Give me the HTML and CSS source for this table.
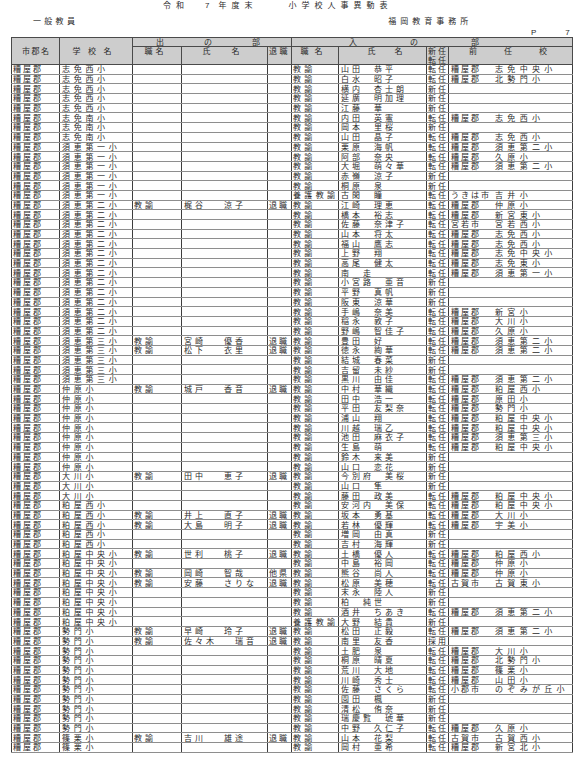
FILE: index.html
```html
<!DOCTYPE html>
<html lang="ja">
<head>
<meta charset="utf-8">
<title>令和７年度末 小学校人事異動表</title>
<link rel="stylesheet" href="styles.css">
</head>
<body>
<div class="page">
  <div class="title"><span class="t1">令和</span><span class="t2">7</span><span class="t3">年度末</span><span class="t4">小学校人事異動表</span></div>
  <div class="sub"><span class="kind">一般教員</span><span class="office">福岡教育事務所</span></div>
  <div class="pno"><span>P</span><span class="pnum">7</span></div>
  <table class="roster">
    <colgroup>
      <col style="width:48px"><col style="width:73px"><col style="width:49px"><col style="width:86px"><col style="width:24px"><col style="width:47px"><col style="width:88px"><col style="width:22px"><col style="width:124px">
    </colgroup>
    <thead>
      <tr class="h1">
        <th rowspan="2" class="h-city"><span class="lab">市郡名</span></th>
        <th rowspan="2" class="h-school"><span class="lab">学校名</span></th>
        <th colspan="3" class="h-out"><span class="lab">出の部</span></th>
        <th colspan="4" class="h-in"><span class="lab">入の部</span></th>
      </tr>
      <tr class="h2">
        <th class="h-pos"><span class="lab">職名</span></th>
        <th class="h-name"><span class="lab">氏名</span></th>
        <th class="h-ret"><span class="lab">退職</span></th>
        <th class="h-pos2"><span class="lab">職名</span></th>
        <th class="h-name2"><span class="lab">氏名</span></th>
        <th class="h-new"><span class="lab">新任</span><br><span class="lab">転任</span></th>
        <th class="h-prev"><span class="lab">前任校</span></th>
      </tr>
    </thead>
    <tbody>
      <tr><td>糟屋郡</td><td>志免西小</td><td></td><td></td><td></td><td>教諭</td><td><span>山田</span><span>恭平</span></td><td>転任</td><td><span class="pc">糟屋郡</span><span class="ps">志免中央小</span></td></tr>
      <tr><td>糟屋郡</td><td>志免西小</td><td></td><td></td><td></td><td>教諭</td><td><span>白水</span><span>昭子</span></td><td>転任</td><td><span class="pc">糟屋郡</span><span class="ps">北勢門小</span></td></tr>
      <tr><td>糟屋郡</td><td>志免西小</td><td></td><td></td><td></td><td>教諭</td><td><span>横内</span><span>杏士朗</span></td><td>新任</td><td></td></tr>
      <tr><td>糟屋郡</td><td>志免西小</td><td></td><td></td><td></td><td>教諭</td><td><span>延廣</span><span>明加理</span></td><td>新任</td><td></td></tr>
      <tr><td>糟屋郡</td><td>志免西小</td><td></td><td></td><td></td><td>教諭</td><td><span>江藤</span><span>華</span></td><td>新任</td><td></td></tr>
      <tr><td>糟屋郡</td><td>志免南小</td><td></td><td></td><td></td><td>教諭</td><td><span>内田</span><span>英憲</span></td><td>転任</td><td><span class="pc">糟屋郡</span><span class="ps">志免西小</span></td></tr>
      <tr><td>糟屋郡</td><td>志免南小</td><td></td><td></td><td></td><td>教諭</td><td><span>岡本</span><span>里桜</span></td><td>新任</td><td></td></tr>
      <tr><td>糟屋郡</td><td>志免南小</td><td></td><td></td><td></td><td>教諭</td><td><span>山田</span><span>晶子</span></td><td>転任</td><td><span class="pc">糟屋郡</span><span class="ps">志免西小</span></td></tr>
      <tr><td>糟屋郡</td><td>須恵第一小</td><td></td><td></td><td></td><td>教諭</td><td><span>栗原</span><span>海帆</span></td><td>転任</td><td><span class="pc">糟屋郡</span><span class="ps">須恵第二小</span></td></tr>
      <tr><td>糟屋郡</td><td>須恵第一小</td><td></td><td></td><td></td><td>教諭</td><td><span>阿部</span><span>奈央</span></td><td>転任</td><td><span class="pc">糟屋郡</span><span class="ps">久原小</span></td></tr>
      <tr><td>糟屋郡</td><td>須恵第一小</td><td></td><td></td><td></td><td>教諭</td><td><span>大堀</span><span>萌々華</span></td><td>転任</td><td><span class="pc">糟屋郡</span><span class="ps">須恵第二小</span></td></tr>
      <tr><td>糟屋郡</td><td>須恵第一小</td><td></td><td></td><td></td><td>教諭</td><td><span>赤嶺</span><span>涼子</span></td><td>新任</td><td></td></tr>
      <tr><td>糟屋郡</td><td>須恵第一小</td><td></td><td></td><td></td><td>教諭</td><td><span>桐原</span><span>泉</span></td><td>新任</td><td></td></tr>
      <tr><td>糟屋郡</td><td>須恵第一小</td><td></td><td></td><td></td><td>養護教諭</td><td><span>古閑</span><span>瞳</span></td><td>転任</td><td><span class="pc">うきは市</span><span class="ps">吉井小</span></td></tr>
      <tr><td>糟屋郡</td><td>須恵第二小</td><td>教諭</td><td><span>梶谷</span><span>涼子</span></td><td>退職</td><td>教諭</td><td><span>江崎</span><span>理恵</span></td><td>転任</td><td><span class="pc">糟屋郡</span><span class="ps">仲原小</span></td></tr>
      <tr><td>糟屋郡</td><td>須恵第二小</td><td></td><td></td><td></td><td>教諭</td><td><span>橋本</span><span>裕志</span></td><td>転任</td><td><span class="pc">糟屋郡</span><span class="ps">新宮東小</span></td></tr>
      <tr><td>糟屋郡</td><td>須恵第二小</td><td></td><td></td><td></td><td>教諭</td><td><span>佐藤</span><span>奈津子</span></td><td>転任</td><td><span class="pc">宮若市</span><span class="ps">宮若西小</span></td></tr>
      <tr><td>糟屋郡</td><td>須恵第二小</td><td></td><td></td><td></td><td>教諭</td><td><span>山本</span><span>将太</span></td><td>転任</td><td><span class="pc">糟屋郡</span><span class="ps">志免西小</span></td></tr>
      <tr><td>糟屋郡</td><td>須恵第二小</td><td></td><td></td><td></td><td>教諭</td><td><span>福山</span><span>鷹志</span></td><td>転任</td><td><span class="pc">糟屋郡</span><span class="ps">志免西小</span></td></tr>
      <tr><td>糟屋郡</td><td>須恵第二小</td><td></td><td></td><td></td><td>教諭</td><td><span>上野</span><span>翔</span></td><td>転任</td><td><span class="pc">糟屋郡</span><span class="ps">志免中央小</span></td></tr>
      <tr><td>糟屋郡</td><td>須恵第二小</td><td></td><td></td><td></td><td>教諭</td><td><span>高尾</span><span>健太</span></td><td>転任</td><td><span class="pc">糟屋郡</span><span class="ps">志免東小</span></td></tr>
      <tr><td>糟屋郡</td><td>須恵第二小</td><td></td><td></td><td></td><td>教諭</td><td><span>南</span><span>走</span></td><td>転任</td><td><span class="pc">糟屋郡</span><span class="ps">須恵第一小</span></td></tr>
      <tr><td>糟屋郡</td><td>須恵第二小</td><td></td><td></td><td></td><td>教諭</td><td><span>小宮路</span><span>亜音</span></td><td>新任</td><td></td></tr>
      <tr><td>糟屋郡</td><td>須恵第二小</td><td></td><td></td><td></td><td>教諭</td><td><span>平野</span><span>真帆</span></td><td>新任</td><td></td></tr>
      <tr><td>糟屋郡</td><td>須恵第二小</td><td></td><td></td><td></td><td>教諭</td><td><span>阪東</span><span>涼華</span></td><td>新任</td><td></td></tr>
      <tr><td>糟屋郡</td><td>須恵第二小</td><td></td><td></td><td></td><td>教諭</td><td><span>手嶋</span><span>奈美</span></td><td>転任</td><td><span class="pc">糟屋郡</span><span class="ps">新宮小</span></td></tr>
      <tr><td>糟屋郡</td><td>須恵第二小</td><td></td><td></td><td></td><td>教諭</td><td><span>稲永</span><span>敦子</span></td><td>転任</td><td><span class="pc">糟屋郡</span><span class="ps">大川小</span></td></tr>
      <tr><td>糟屋郡</td><td>須恵第二小</td><td></td><td></td><td></td><td>教諭</td><td><span>野嶋</span><span>智佳子</span></td><td>転任</td><td><span class="pc">糟屋郡</span><span class="ps">久原小</span></td></tr>
      <tr><td>糟屋郡</td><td>須恵第三小</td><td>教諭</td><td><span>宮崎</span><span>優香</span></td><td>退職</td><td>教諭</td><td><span>豊田</span><span>好</span></td><td>転任</td><td><span class="pc">糟屋郡</span><span class="ps">須恵第二小</span></td></tr>
      <tr><td>糟屋郡</td><td>須恵第三小</td><td>教諭</td><td><span>松下</span><span>衣里</span></td><td>退職</td><td>教諭</td><td><span>徳永</span><span>絢華</span></td><td>転任</td><td><span class="pc">糟屋郡</span><span class="ps">須恵第二小</span></td></tr>
      <tr><td>糟屋郡</td><td>須恵第三小</td><td></td><td></td><td></td><td>教諭</td><td><span>結城</span><span>春菜</span></td><td>新任</td><td></td></tr>
      <tr><td>糟屋郡</td><td>須恵第三小</td><td></td><td></td><td></td><td>教諭</td><td><span>吉留</span><span>未紗</span></td><td>新任</td><td></td></tr>
      <tr><td>糟屋郡</td><td>須恵第三小</td><td></td><td></td><td></td><td>教諭</td><td><span>黒川</span><span>由佳</span></td><td>転任</td><td><span class="pc">糟屋郡</span><span class="ps">須恵第二小</span></td></tr>
      <tr><td>糟屋郡</td><td>仲原小</td><td>教諭</td><td><span>城戸</span><span>香音</span></td><td>退職</td><td>教諭</td><td><span>中村</span><span>華織</span></td><td>転任</td><td><span class="pc">糟屋郡</span><span class="ps">粕屋西小</span></td></tr>
      <tr><td>糟屋郡</td><td>仲原小</td><td></td><td></td><td></td><td>教諭</td><td><span>田中</span><span>浩一</span></td><td>転任</td><td><span class="pc">糟屋郡</span><span class="ps">原田小</span></td></tr>
      <tr><td>糟屋郡</td><td>仲原小</td><td></td><td></td><td></td><td>教諭</td><td><span>平田</span><span>友梨奈</span></td><td>転任</td><td><span class="pc">糟屋郡</span><span class="ps">勢門小</span></td></tr>
      <tr><td>糟屋郡</td><td>仲原小</td><td></td><td></td><td></td><td>教諭</td><td><span>浦山</span><span>翔</span></td><td>転任</td><td><span class="pc">糟屋郡</span><span class="ps">粕屋中央小</span></td></tr>
      <tr><td>糟屋郡</td><td>仲原小</td><td></td><td></td><td></td><td>教諭</td><td><span>川越</span><span>瑞乙</span></td><td>転任</td><td><span class="pc">糟屋郡</span><span class="ps">粕屋中央小</span></td></tr>
      <tr><td>糟屋郡</td><td>仲原小</td><td></td><td></td><td></td><td>教諭</td><td><span>池田</span><span>麻衣子</span></td><td>転任</td><td><span class="pc">糟屋郡</span><span class="ps">須恵第三小</span></td></tr>
      <tr><td>糟屋郡</td><td>仲原小</td><td></td><td></td><td></td><td>教諭</td><td><span>生島</span><span>萌</span></td><td>転任</td><td><span class="pc">糟屋郡</span><span class="ps">粕屋中央小</span></td></tr>
      <tr><td>糟屋郡</td><td>仲原小</td><td></td><td></td><td></td><td>教諭</td><td><span>鈴木</span><span>来美</span></td><td>新任</td><td></td></tr>
      <tr><td>糟屋郡</td><td>仲原小</td><td></td><td></td><td></td><td>教諭</td><td><span>山口</span><span>恋花</span></td><td>新任</td><td></td></tr>
      <tr><td>糟屋郡</td><td>大川小</td><td>教諭</td><td><span>田中</span><span>恵子</span></td><td>退職</td><td>教諭</td><td><span>今別府</span><span>美桜</span></td><td>新任</td><td></td></tr>
      <tr><td>糟屋郡</td><td>大川小</td><td></td><td></td><td></td><td>教諭</td><td><span>山口</span><span>隼</span></td><td>新任</td><td></td></tr>
      <tr><td>糟屋郡</td><td>大川小</td><td></td><td></td><td></td><td>教諭</td><td><span>藤田</span><span>政美</span></td><td>転任</td><td><span class="pc">糟屋郡</span><span class="ps">粕屋中央小</span></td></tr>
      <tr><td>糟屋郡</td><td>粕屋西小</td><td></td><td></td><td></td><td>教諭</td><td><span>安河内</span><span>美保</span></td><td>転任</td><td><span class="pc">糟屋郡</span><span class="ps">粕屋中央小</span></td></tr>
      <tr><td>糟屋郡</td><td>粕屋西小</td><td>教諭</td><td><span>井上</span><span>直子</span></td><td>退職</td><td>教諭</td><td><span>坂本</span><span>勇基</span></td><td>転任</td><td><span class="pc">糟屋郡</span><span class="ps">大川小</span></td></tr>
      <tr><td>糟屋郡</td><td>粕屋西小</td><td>教諭</td><td><span>大島</span><span>明子</span></td><td>退職</td><td>教諭</td><td><span>若林</span><span>優輝</span></td><td>転任</td><td><span class="pc">糟屋郡</span><span class="ps">宇美小</span></td></tr>
      <tr><td>糟屋郡</td><td>粕屋西小</td><td></td><td></td><td></td><td>教諭</td><td><span>増岡</span><span>由真</span></td><td>新任</td><td></td></tr>
      <tr><td>糟屋郡</td><td>粕屋西小</td><td></td><td></td><td></td><td>教諭</td><td><span>吉村</span><span>海輝</span></td><td>新任</td><td></td></tr>
      <tr><td>糟屋郡</td><td>粕屋中央小</td><td>教諭</td><td><span>世利</span><span>桃子</span></td><td>退職</td><td>教諭</td><td><span>土橋</span><span>優人</span></td><td>転任</td><td><span class="pc">糟屋郡</span><span class="ps">粕屋西小</span></td></tr>
      <tr><td>糟屋郡</td><td>粕屋中央小</td><td></td><td></td><td></td><td>教諭</td><td><span>中島</span><span>裕岡</span></td><td>転任</td><td><span class="pc">糟屋郡</span><span class="ps">仲原小</span></td></tr>
      <tr><td>糟屋郡</td><td>粕屋中央小</td><td>教諭</td><td><span>岡崎</span><span>智哉</span></td><td>他県</td><td>教諭</td><td><span>熊谷</span><span>尚人</span></td><td>転任</td><td><span class="pc">糟屋郡</span><span class="ps">仲原小</span></td></tr>
      <tr><td>糟屋郡</td><td>粕屋中央小</td><td>教諭</td><td><span>安藤</span><span>さりな</span></td><td>退職</td><td>教諭</td><td><span>松原</span><span>美穂</span></td><td>転任</td><td><span class="pc">古賀市</span><span class="ps">古賀東小</span></td></tr>
      <tr><td>糟屋郡</td><td>粕屋中央小</td><td></td><td></td><td></td><td>教諭</td><td><span>末永</span><span>陸人</span></td><td>新任</td><td></td></tr>
      <tr><td>糟屋郡</td><td>粕屋中央小</td><td></td><td></td><td></td><td>教諭</td><td><span>柏</span><span>純世</span></td><td>新任</td><td></td></tr>
      <tr><td>糟屋郡</td><td>粕屋中央小</td><td></td><td></td><td></td><td>教諭</td><td><span>酒井</span><span>ちあき</span></td><td>転任</td><td><span class="pc">糟屋郡</span><span class="ps">須恵第二小</span></td></tr>
      <tr><td>糟屋郡</td><td>粕屋中央小</td><td></td><td></td><td></td><td>養護教諭</td><td><span>大野</span><span>結貴</span></td><td>新任</td><td></td></tr>
      <tr><td>糟屋郡</td><td>勢門小</td><td>教諭</td><td><span>早崎</span><span>玲子</span></td><td>退職</td><td>教諭</td><td><span>松田</span><span>正毅</span></td><td>転任</td><td><span class="pc">糟屋郡</span><span class="ps">須恵第二小</span></td></tr>
      <tr><td>糟屋郡</td><td>勢門小</td><td>教諭</td><td><span>佐々木</span><span>瑞音</span></td><td>退職</td><td>教諭</td><td><span>南里</span><span>友香</span></td><td>採用</td><td></td></tr>
      <tr><td>糟屋郡</td><td>勢門小</td><td></td><td></td><td></td><td>教諭</td><td><span>土肥</span><span>泉</span></td><td>転任</td><td><span class="pc">糟屋郡</span><span class="ps">大川小</span></td></tr>
      <tr><td>糟屋郡</td><td>勢門小</td><td></td><td></td><td></td><td>教諭</td><td><span>桐原</span><span>晴夏</span></td><td>転任</td><td><span class="pc">糟屋郡</span><span class="ps">北勢門小</span></td></tr>
      <tr><td>糟屋郡</td><td>勢門小</td><td></td><td></td><td></td><td>教諭</td><td><span>荒川</span><span>大地</span></td><td>転任</td><td><span class="pc">糟屋郡</span><span class="ps">篠栗小</span></td></tr>
      <tr><td>糟屋郡</td><td>勢門小</td><td></td><td></td><td></td><td>教諭</td><td><span>川崎</span><span>秀士</span></td><td>転任</td><td><span class="pc">糟屋郡</span><span class="ps">山田小</span></td></tr>
      <tr><td>糟屋郡</td><td>勢門小</td><td></td><td></td><td></td><td>教諭</td><td><span>佐藤</span><span>さくら</span></td><td>転任</td><td><span class="pc">小郡市</span><span class="ps">のぞみが丘小</span></td></tr>
      <tr><td>糟屋郡</td><td>勢門小</td><td></td><td></td><td></td><td>教諭</td><td><span>園田</span><span>楓</span></td><td>新任</td><td></td></tr>
      <tr><td>糟屋郡</td><td>勢門小</td><td></td><td></td><td></td><td>教諭</td><td><span>清松</span><span>侑奈</span></td><td>新任</td><td></td></tr>
      <tr><td>糟屋郡</td><td>勢門小</td><td></td><td></td><td></td><td>教諭</td><td><span>瑞慶覧</span><span>琥華</span></td><td>新任</td><td></td></tr>
      <tr><td>糟屋郡</td><td>勢門小</td><td></td><td></td><td></td><td>教諭</td><td><span>中野</span><span>久仁子</span></td><td>転任</td><td><span class="pc">糟屋郡</span><span class="ps">久原小</span></td></tr>
      <tr><td>糟屋郡</td><td>篠栗小</td><td>教諭</td><td><span>吉川</span><span>雄途</span></td><td>退職</td><td>教諭</td><td><span>山本</span><span>花梨</span></td><td>転任</td><td><span class="pc">古賀市</span><span class="ps">古賀西小</span></td></tr>
      <tr><td>糟屋郡</td><td>篠栗小</td><td></td><td></td><td></td><td>教諭</td><td><span>岡村</span><span>亜希</span></td><td>転任</td><td><span class="pc">糟屋郡</span><span class="ps">新宮北小</span></td></tr>
    </tbody>
  </table>
</div>
</body>
</html>
```
FILE: styles.css
```css
html, body {
  margin: 0;
  padding: 0;
  background: #ffffff;
}

.page {
  padding-left: 11px;
  font-family: "Noto Sans CJK JP", "Noto Sans", sans-serif;
  font-size: 8px;
  color: #2b2b2b;
}

.title {
  height: 10px;
  line-height: 10px;
  padding-left: 152px;
  letter-spacing: 5px;
  white-space: nowrap;
}
.title .t2 { margin-left: 16px; font-family: "Liberation Sans", sans-serif; letter-spacing: 0; margin-right: 9px; }
.title .t4 { margin-left: 31px; }

.sub {
  margin-top: 6px;
  height: 10px;
  line-height: 10px;
  display: flex;
  white-space: nowrap;
}
.sub .kind { margin-left: 22px; letter-spacing: 3.3px; }
.sub .office { margin-left: 310px; letter-spacing: 4px; }

.pno {
  margin-top: 2px;
  height: 9px;
  line-height: 9px;
  padding-left: 520px;
  font-family: "Liberation Sans", sans-serif;
  font-size: 8px;
}
.pno .pnum { margin-left: 29px; }

.roster {
  border-collapse: collapse;
  table-layout: fixed;
  width: 561px;
  border: 1px solid #3a3a3a;
}

.roster th {
  font-weight: normal;
  background-color: #d5d5d5;
  background-image: radial-gradient(#bcbcbc 0.5px, transparent 0.8px);
  background-size: 2px 2px;
  border: 1px solid #4a4a4a;
  padding: 0;
  line-height: 8.5px;
  white-space: nowrap;
  vertical-align: top;
}

.roster .h1 { height: 9px; }
.roster .h1 th { line-height: 8px; }
.roster .h2 { height: 17px; }

.h-city { padding-top: 9px !important; text-align: center; }
.h-city .lab { letter-spacing: 1.5px; margin-right: -1.5px; }
.h-school { padding-top: 9px !important; text-align: center; padding-right: 8px !important; }
.h-school .lab { letter-spacing: 7.5px; margin-right: -7.5px; }
.h-out { text-align: left; padding-left: 23px !important; }
.h-out .lab { letter-spacing: 40px; margin-right: -40px; }
.h-in { text-align: left; padding-left: 57px !important; }
.h-in .lab { letter-spacing: 53px; margin-right: -53px; }
.h-pos { text-align: center; padding-right: 6px !important; }
.h-pos .lab { letter-spacing: 3px; margin-right: -3px; }
.h-name { text-align: center; padding-right: 7px !important; }
.h-name .lab { letter-spacing: 21px; margin-right: -21px; }
.h-ret { text-align: left; padding-left: 1px !important; }
.h-ret .lab { letter-spacing: 2.5px; margin-right: -2.5px; }
.h-pos2 { text-align: center; padding-right: 7px !important; }
.h-pos2 .lab { letter-spacing: 6px; margin-right: -6px; }
.h-name2 { text-align: center; padding-left: 5px !important; }
.h-name2 .lab { letter-spacing: 19px; margin-right: -19px; }
.h-new { text-align: left; padding-left: 1px !important; }
.h-new .lab { letter-spacing: 2px; margin-right: -2px; }
.h-prev { text-align: center; padding-right: 5px !important; }
.h-prev .lab { letter-spacing: 27px; margin-right: -27px; }

.roster tbody tr { height: 9.7px; }

.roster td {
  padding: 0 0 0 2px;
  line-height: 8px;
  border-left: 1px solid #3e3e3e;
  border-right: 1px solid #3e3e3e;
  border-bottom: 1px solid #8e8e8e;
  white-space: nowrap;
  overflow: hidden;
  vertical-align: middle;
}

.roster td:nth-child(1) { letter-spacing: 2px; padding-left: 1px; }
.roster td:nth-child(2) { letter-spacing: 3.7px; }
.roster td:nth-child(3) { letter-spacing: 3px; padding-left: 1px; }
.roster td:nth-child(4) { letter-spacing: 3px; }
.roster td:nth-child(4) span + span { margin-left: 18px; }
.roster td:nth-child(5) { letter-spacing: 2px; padding-left: 1px; }
.roster td:nth-child(6) { letter-spacing: 3.3px; padding-left: 1px; }
.roster td:nth-child(7) { letter-spacing: 3px; }
.roster td:nth-child(7) span + span { margin-left: 11px; }
.roster td:nth-child(8) { letter-spacing: 2px; padding-left: 1px; }

.pc {
  display: inline-block;
  width: 44px;
  letter-spacing: 2px;
}
.ps { letter-spacing: 4.3px; margin-right: -4.3px; }
```
